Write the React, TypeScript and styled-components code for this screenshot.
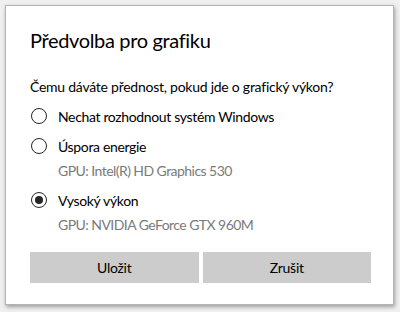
import React, { useState } from 'react';
import styled, { createGlobalStyle } from 'styled-components';

const GlobalStyle = createGlobalStyle`
  html, body {
    margin: 0;
    padding: 0;
    background: #f0f0f0;
  }
  body {
    font-family: Lato, "Noto Sans", sans-serif;
    color: #000;
  }
`;

const Page = styled.div`
  width: 400px;
  height: 312px;
  padding: 5px 6px 7px 5px;
  box-sizing: border-box;
`;

const Dialog = styled.div`
  width: 389px;
  height: 300px;
  box-sizing: border-box;
  background: #fff;
  border: 1px solid #b4b4b4;
  box-shadow: 1px 2px 4px rgba(0, 0, 0, 0.35);
  padding: 20px 22px 0 24px;
  display: flex;
  flex-direction: column;
`;

const Title = styled.h1`
  margin: 0;
  font-size: 20px;
  font-weight: 400;
  line-height: 28px;
  letter-spacing: -0.35px;
`;

const Question = styled.p`
  margin: 23px 0 0;
  font-size: 14px;
  line-height: 20px;
  letter-spacing: -0.25px;
`;

const Options = styled.div`
  display: flex;
  flex-direction: column;
  margin-top: 8px;
`;

const Option = styled.label<{ $first?: boolean }>`
  display: flex;
  align-items: center;
  gap: 11px;
  height: 22px;
  margin-top: ${(p) => (p.$first ? '0' : '8px')};
  font-size: 14px;
  letter-spacing: -0.35px;
  cursor: pointer;
`;

const Radio = styled.span<{ $checked: boolean }>`
  width: 16px;
  height: 16px;
  margin-left: 1px;
  box-sizing: border-box;
  border: 1.5px solid #262626;
  border-radius: 50%;
  display: flex;
  align-items: center;
  justify-content: center;
  &::after {
    content: '';
    display: ${(p) => (p.$checked ? 'block' : 'none')};
    width: 8px;
    height: 8px;
    border-radius: 50%;
    background: #262626;
  }
`;

const Gpu = styled.div`
  margin: 4px 0 0 28px;
  font-size: 14px;
  line-height: 20px;
  letter-spacing: -0.55px;
  color: #7a7a7a;
`;

const Buttons = styled.div`
  display: grid;
  grid-template-columns: 1fr 1fr;
  gap: 4px;
  margin-top: 17px;
`;

const Button = styled.button`
  height: 31px;
  border: none;
  background: #cccccc;
  font-family: inherit;
  font-size: 14px;
  letter-spacing: -0.25px;
  color: #000;
  cursor: pointer;
`;

const options = [
  { id: 'auto', label: 'Nechat rozhodnout systém Windows' },
  { id: 'save', label: 'Úspora energie', gpu: 'GPU: Intel(R) HD Graphics 530' },
  { id: 'high', label: 'Vysoký výkon', gpu: 'GPU: NVIDIA GeForce GTX 960M' },
];

export default function App() {
  const [value, setValue] = useState('high');
  return (
    <Page>
      <GlobalStyle />
      <Dialog>
        <Title>Předvolba pro grafiku</Title>
        <Question>Čemu dáváte přednost, pokud jde o grafický výkon?</Question>
        <Options>
          {options.map((o, i) => (
            <React.Fragment key={o.id}>
              <Option $first={i === 0} onClick={() => setValue(o.id)}>
                <Radio $checked={value === o.id} />
                {o.label}
              </Option>
              {o.gpu && <Gpu>{o.gpu}</Gpu>}
            </React.Fragment>
          ))}
        </Options>
        <Buttons>
          <Button>Uložit</Button>
          <Button>Zrušit</Button>
        </Buttons>
      </Dialog>
    </Page>
  );
}
